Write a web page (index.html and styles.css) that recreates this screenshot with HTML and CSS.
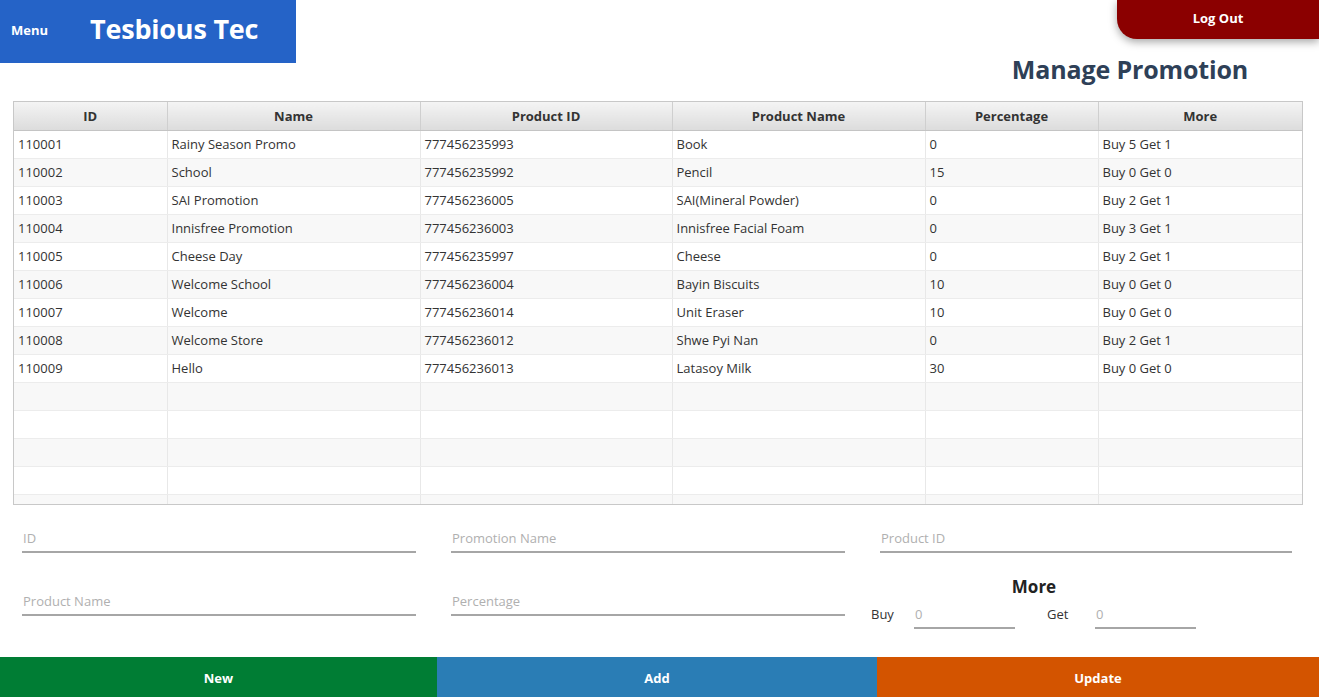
FILE: index.html
```html
<!DOCTYPE html>
<html>
<head>
<meta charset="utf-8">
<link rel="stylesheet" href="styles.css">
</head>
<body>
<div class="app">
  <header class="topbar">
    <div class="brand">
      <span class="menu">Menu</span>
      <span class="logo">Tesbious Tec</span>
    </div>
    <div class="top-right">
      <button class="logout">Log Out</button>
      <h1 class="title">Manage Promotion</h1>
    </div>
  </header>

  <div class="table-wrap">
    <table class="grid">
      <colgroup>
        <col class="c1"><col class="c2"><col class="c3"><col class="c4"><col class="c5"><col class="c6">
      </colgroup>
      <thead>
        <tr><th>ID</th><th>Name</th><th>Product ID</th><th>Product Name</th><th>Percentage</th><th>More</th></tr>
      </thead>
      <tbody>
        <tr><td>110001</td><td>Rainy Season Promo</td><td>777456235993</td><td>Book</td><td>0</td><td>Buy 5 Get 1</td></tr>
        <tr><td>110002</td><td>School</td><td>777456235992</td><td>Pencil</td><td>15</td><td>Buy 0 Get 0</td></tr>
        <tr><td>110003</td><td>SAI Promotion</td><td>777456236005</td><td>SAI(Mineral Powder)</td><td>0</td><td>Buy 2 Get 1</td></tr>
        <tr><td>110004</td><td>Innisfree Promotion</td><td>777456236003</td><td>Innisfree Facial Foam</td><td>0</td><td>Buy 3 Get 1</td></tr>
        <tr><td>110005</td><td>Cheese Day</td><td>777456235997</td><td>Cheese</td><td>0</td><td>Buy 2 Get 1</td></tr>
        <tr><td>110006</td><td>Welcome School</td><td>777456236004</td><td>Bayin Biscuits</td><td>10</td><td>Buy 0 Get 0</td></tr>
        <tr><td>110007</td><td>Welcome</td><td>777456236014</td><td>Unit Eraser</td><td>10</td><td>Buy 0 Get 0</td></tr>
        <tr><td>110008</td><td>Welcome Store</td><td>777456236012</td><td>Shwe Pyi Nan</td><td>0</td><td>Buy 2 Get 1</td></tr>
        <tr><td>110009</td><td>Hello</td><td>777456236013</td><td>Latasoy Milk</td><td>30</td><td>Buy 0 Get 0</td></tr>
        <tr><td></td><td></td><td></td><td></td><td></td><td></td></tr>
        <tr><td></td><td></td><td></td><td></td><td></td><td></td></tr>
        <tr><td></td><td></td><td></td><td></td><td></td><td></td></tr>
        <tr><td></td><td></td><td></td><td></td><td></td><td></td></tr>
        <tr><td></td><td></td><td></td><td></td><td></td><td></td></tr>
      </tbody>
    </table>
  </div>

  <div class="form">
    <div class="form-row row1">
      <input class="field f1" placeholder="ID">
      <input class="field f2" placeholder="Promotion Name">
      <input class="field f3" placeholder="Product ID">
    </div>
    <div class="form-row row2">
      <input class="field f1" placeholder="Product Name">
      <input class="field f2" placeholder="Percentage">
      <div class="more">
        <div class="more-title">More</div>
        <div class="more-row">
          <span class="lbl">Buy</span>
          <input class="field small" placeholder="0">
          <span class="lbl get">Get</span>
          <input class="field small" placeholder="0">
        </div>
      </div>
    </div>
  </div>

  <footer class="actions">
    <button class="act new">New</button>
    <button class="act add">Add</button>
    <button class="act update">Update</button>
  </footer>
</div>
</body>
</html>
```

FILE: styles.css
```css
* { box-sizing: border-box; }
html, body { margin: 0; padding: 0; }
body {
  width: 1319px;
  height: 697px;
  overflow: hidden;
  font-family: "Open Sans", "Noto Sans", sans-serif;
  color: #333;
  background: #fff;
}
.app { display: flex; flex-direction: column; height: 697px; }

.topbar { display: flex; justify-content: space-between; height: 101px; }
.brand {
  width: 296px; height: 63px;
  background: #2563c7;
  display: flex; align-items: center;
  color: #fff; font-weight: 700;
}
.menu { font-size: 13px; margin-left: 11px; width: 79px; margin-top: -4px; }
.logo { font-size: 27px; letter-spacing: -0.2px; margin-top: -6px; }

.top-right { display: flex; flex-direction: column; align-items: flex-end; }
.logout {
  width: 202px; height: 39px;
  background: #8b0000; color: #fff;
  border: 0; border-bottom-left-radius: 20px;
  font-family: inherit; font-weight: 700; font-size: 13px;
  box-shadow: 0 3px 8px rgba(0,0,0,0.35);
  padding: 0 0 4px 0;
}
.title {
  margin: 13px 71px 0 0;
  font-size: 25px; font-weight: 700; color: #2e4057;
  line-height: 35px;
  letter-spacing: -0.15px;
}

.table-wrap {
  margin: 0 16px 0 13px;
  height: 404px;
  border: 1px solid #c8c8c8;
  overflow: hidden;
}
.grid { border-collapse: collapse; table-layout: fixed; width: 100%; font-size: 13px; }
.c1 { width: 153px; } .c2 { width: 253px; } .c3 { width: 252px; }
.c4 { width: 253px; } .c5 { width: 173px; } .c6 { width: auto; }
.grid th {
  height: 28px;
  background: linear-gradient(#f4f4f4, #dcdcdc);
  border-right: 1px solid #cfcfcf;
  border-bottom: 1px solid #c4c4c4;
  font-weight: 700; color: #333;
  padding: 0;
}
.grid th:last-child { border-right: 0; }
.grid td {
  height: 28px;
  padding: 0 4px;
  border-right: 1px solid #e8e8e8;
  border-bottom: 1px solid #ececec;
  white-space: nowrap;
}
.grid td:last-child { border-right: 0; }
.grid tbody tr:nth-child(even) td { background: #f8f8f8; }

.form { padding: 0 26px 0 22px; flex: 1; }
.form-row { display: flex; }
.row1 { height: 48px; align-items: flex-end; }
.row2 { align-items: flex-start; }
.field {
  border: 0; border-bottom: 2px solid #a6a6a6;
  font-family: inherit; font-size: 13px;
  padding: 0 1px 4px;
  height: 24px;
  outline: none; background: transparent;
  color: #333;
}
.field::placeholder { color: #b0b0b0; }
.f1, .f2 { width: 394px; margin-right: 35px; }
.row2 .f1, .row2 .f2 { margin-top: 39px; }
.f3 { width: 412px; }
.more { width: 326px; display: flex; flex-direction: column; margin-left: -9px; margin-top: 22px; }
.more-title { font-weight: 700; font-size: 17px; line-height: 23px; text-align: center; color: #222; }
.more-row { display: flex; align-items: flex-end; margin-top: 7px; }
.lbl { font-size: 13px; width: 43px; padding-bottom: 6px; color: #333; }
.lbl.get { margin-left: 32px; width: 48px; }
.small { width: 101px; }

.actions { display: flex; height: 40px; }
.act {
  border: 0; color: #fff; font-family: inherit; font-weight: 700; font-size: 13px;
  height: 40px; padding-top: 2px;
}
.new { width: 437px; background: #007d34; }
.add { width: 440px; background: #2a7db5; }
.update { width: 442px; background: #d35400; }
```
